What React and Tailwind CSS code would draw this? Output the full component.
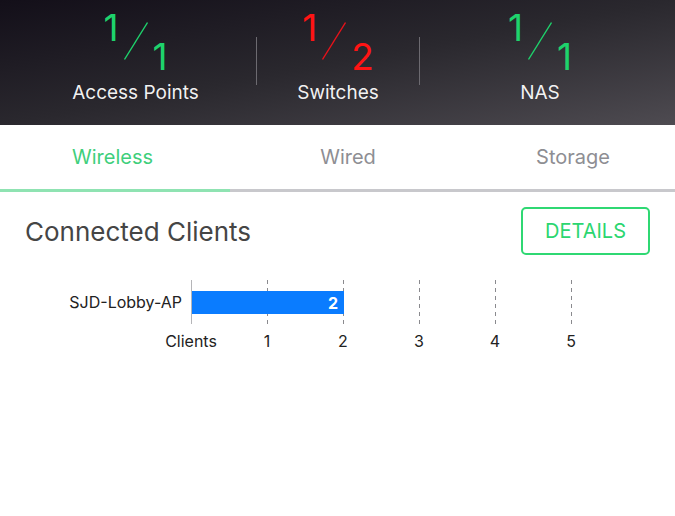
import React from 'react';

const stats = [
    { label: 'Access Points', num: '1', den: '1', color: 'text-[#1ed36c]', stroke: '#1ed36c', width: 'w-[241px]' },
    { label: 'Switches', num: '1', den: '2', color: 'text-[#ff1414]', stroke: '#e8121a', width: 'flex-1' },
    { label: 'NAS', num: '1', den: '1', color: 'text-[#1ed36c]', stroke: '#1ed36c', width: 'w-[240px]' },
];

const ticks = [1, 2, 3, 4, 5];

function Fraction({ num, den, color, stroke }) {
    return (
        <div className={`flex items-start h-[62px] ${color}`}>
            <span className="text-[37px] leading-none mt-[9px]">{num}</span>
            <svg width="24" height="38" className="mt-[22px] mx-[5px]">
                <line x1="23.5" y1="0.5" x2="0.5" y2="37.5" stroke={stroke} strokeWidth="1.4" />
            </svg>
            <span className="text-[37px] leading-none mt-[38px]">{den}</span>
        </div>
    );
}

export default function App() {
    return (
        <div className="w-[675px] h-[516px] bg-white overflow-hidden font-['Inter','Liberation_Sans',sans-serif]">
            {/* Summary header */}
            <div className="h-[125px] flex items-start px-[15px] bg-linear-to-br from-[#130f19] via-[#2a282e] to-[#4e4b51]">
                {stats.map((s, i) => (
                    <React.Fragment key={s.label}>
                        {i > 0 && <div className="w-px h-[48px] mt-[37px] bg-[#6c6a70]" />}
                        <div className={`${s.width} flex flex-col items-center`}>
                            <Fraction {...s} />
                            <span className="text-[19px] text-white/95 mt-[21px] leading-none">{s.label}</span>
                        </div>
                    </React.Fragment>
                ))}
            </div>

            {/* Tabs */}
            <div className="flex h-[64px] items-center text-[20px]">
                <div className="w-[225px] text-center text-[#3fcf7c]">Wireless</div>
                <div className="w-[246px] text-center text-[#8e8e93]">Wired</div>
                <div className="flex-1 text-center text-[#8e8e93]">Storage</div>
            </div>
            <div className="flex h-[3px]">
                <div className="w-[230px] bg-[#8fe3b2]" />
                <div className="flex-1 bg-[#c8c8cc]" />
            </div>

            {/* Connected clients */}
            <div className="flex items-center justify-between pl-[25px] pr-[25px] mt-[15px]">
                <h2 className="text-[26px] text-[#454545]">Connected Clients</h2>
                <button
                    type="button"
                    className="w-[129px] h-[48px] border-2 border-[#2fd873] rounded-[5px] text-[20px] text-[#2bd670]"
                >
                    DETAILS
                </button>
            </div>

            {/* Chart */}
            <div className="flex mt-[25px]">
                <div className="w-[191px] pr-[9px] flex items-center justify-end text-[16px] text-[#222]">
                    SJD-Lobby-AP
                </div>
                <div className="relative w-[400px] h-[44px] border-l border-[#b5b5b8]">
                    <svg width="400" height="44" className="absolute left-0 top-0">
                        {ticks.map((t) => (
                            <line
                                key={t}
                                x1={76 * t - 0.5}
                                y1="0"
                                x2={76 * t - 0.5}
                                y2="44"
                                stroke="#8a8a8e"
                                strokeWidth="1"
                                strokeDasharray="4 4"
                            />
                        ))}
                    </svg>
                    <div className="relative mt-[11px] h-[23px] w-[152px] bg-[#0a7cff] flex items-center justify-end pr-[6px]">
                        <span className="text-white font-bold text-[16px] leading-none">2</span>
                    </div>
                </div>
            </div>
            <div className="flex ml-[153px] mt-[5px] text-[16px] text-[#222]">
                <div className="w-[76px] text-center">Clients</div>
                {ticks.map((t) => (
                    <div key={t} className="w-[76px] text-center">{t}</div>
                ))}
            </div>
        </div>
    );
}
